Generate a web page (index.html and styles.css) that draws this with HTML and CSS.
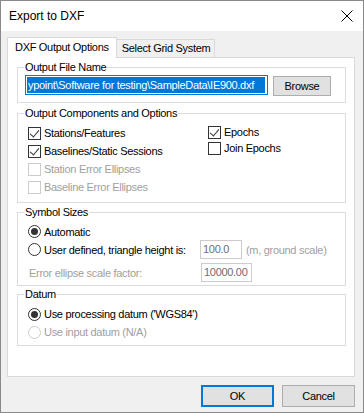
FILE: index.html
```html
<!DOCTYPE html>
<html lang="en">
<head>
  <meta charset="UTF-8">
  <title>Export to DXF</title>
  <link rel="stylesheet" href="styles.css">
</head>
<body>
  <div class="window">
    <div class="titlebar">
      <span class="title">Export to DXF</span>
      <svg class="close" width="12" height="12" viewBox="0 0 12 12">
        <path d="M0.5 0.5 L11.5 11.5 M11.5 0.5 L0.5 11.5" stroke="#000" stroke-width="1" fill="none"/>
      </svg>
    </div>

    <div class="content">
      <div class="tabs">
        <div class="tab active">DXF Output Options</div>
        <div class="tab">Select Grid System</div>
      </div>

      <div class="panel">
        <fieldset class="group group-file">
          <legend>Output File Name</legend>
          <div class="file-row">
            <div class="textbox focused"><span class="selected">ypoint\Software for testing\SampleData\IE900.dxf</span></div>
            <button class="btn btn-browse">Browse</button>
          </div>
        </fieldset>

        <fieldset class="group group-options">
          <legend>Output Components and Options</legend>
          <div class="columns">
            <div class="col col-left">
              <label class="check"><span class="box checked"></span>Stations/Features</label>
              <label class="check"><span class="box checked"></span>Baselines/Static Sessions</label>
              <label class="check disabled"><span class="box"></span>Station Error Ellipses</label>
              <label class="check disabled"><span class="box"></span>Baseline Error Ellipses</label>
            </div>
            <div class="col col-right">
              <label class="check"><span class="box checked"></span>Epochs</label>
              <label class="check"><span class="box"></span>Join Epochs</label>
            </div>
          </div>
        </fieldset>

        <fieldset class="group group-symbols">
          <legend>Symbol Sizes</legend>
          <label class="radio row-auto"><span class="dot on"></span>Automatic</label>
          <div class="row row-user">
            <label class="radio user-label"><span class="dot"></span>User defined, triangle height is:</label>
            <div class="textbox small">100.0</div>
            <span class="hint">(m, ground scale)</span>
          </div>
          <div class="row row-scale">
            <span class="field-label">Error ellipse scale factor:</span>
            <div class="textbox wide">10000.00</div>
          </div>
        </fieldset>

        <fieldset class="group group-datum">
          <legend>Datum</legend>
          <label class="radio"><span class="dot on"></span>Use processing datum ('WGS84')</label>
          <label class="radio disabled"><span class="dot"></span>Use input datum (N/A)</label>
        </fieldset>
      </div>

      <div class="buttons">
        <button class="btn btn-default">OK</button>
        <button class="btn">Cancel</button>
      </div>
    </div>
  </div>
</body>
</html>
```

FILE: styles.css
```css
body {
  margin: 0;
  font-family: "Liberation Sans", Arial, sans-serif;
  font-size: 11px;
  letter-spacing: -0.3px;
  color: #000;
}
.window {
  width: 364px;
  height: 413px;
  box-sizing: border-box;
  border: 1px solid #8a8a8a;
  background-color: #f0f0f0;
}
.titlebar {
  height: 30px;
  background-color: #fff;
  display: flex;
  align-items: center;
  justify-content: space-between;
  padding: 0 10px 0 8px;
  font-size: 12px;
  letter-spacing: 0;
}
.content {
  padding: 7px 8px 0 6px;
}

/* tabs */
.tabs {
  display: flex;
  align-items: flex-end;
  height: 19px;
  position: relative;
  z-index: 1;
}
.tab {
  height: 17px;
  line-height: 16px;
  padding: 0 4px 0 5px;
  border: 1px solid #d9d9d9;
  border-left: none;
  border-bottom: none;
  background-color: #f0f0f0;
  white-space: nowrap;
}
.tab.active {
  height: 20px;
  line-height: 18px;
  padding: 0 7px 0 7px;
  border-left: 1px solid #d9d9d9;
  background-color: #fff;
  margin-bottom: -1px;
}
.panel {
  height: 316px;
  border: 1px solid #d9d9d9;
  background-color: #fff;
  padding: 2px 8px 0 9px;
}

/* group boxes */
.group {
  margin: 0;
  min-width: 0;
  width: 329px;
  box-sizing: border-box;
  border: 1px solid #dcdcdc;
  padding: 0 7px 0 10px;
}
.group legend {
  margin-left: -4px;
  padding: 0 1px;
  line-height: 14px;
}
.group-file {
  padding-top: 1px;
  padding-bottom: 6px;
}
.group-options {
  margin-top: 3px;
  padding-top: 4px;
  padding-bottom: 6px;
}
.group-symbols {
  margin-top: 2px;
  padding-top: 4px;
  padding-bottom: 3px;
}
.group-datum {
  margin-top: 1px;
  padding-top: 4px;
  padding-bottom: 4px;
}

/* file row */
.file-row {
  display: flex;
  align-items: flex-start;
  margin-left: -3px;
}
.textbox {
  box-sizing: border-box;
  height: 19px;
  border: 1px solid #cccccc;
  background-color: #fff;
  color: #6d6d6d;
  line-height: 17px;
  padding: 0 2px;
  white-space: nowrap;
  overflow: hidden;
}
.textbox.focused {
  width: 243px;
  height: 20px;
  border-color: #0078d7;
  display: flex;
  justify-content: flex-end;
  padding: 1px 2px 1px 1px;
}
.selected {
  background-color: #0078d7;
  color: #fff;
  line-height: 16px;
  white-space: nowrap;
  padding-left: 1px;
  flex: 1 0 auto;
}
.btn {
  font-family: inherit;
  font-size: 11px;
  letter-spacing: -0.3px;
  color: #000;
  background-color: #e1e1e1;
  border: 1px solid #adadad;
  padding: 0;
  box-sizing: border-box;
}
.btn-browse {
  width: 58px;
  height: 20px;
  margin: 1px 0 0 5px;
}

/* checkboxes */
.columns {
  display: flex;
}
.col-left {
  width: 180px;
}
.check, .radio {
  display: flex;
  align-items: center;
  height: 18px;
  white-space: nowrap;
}
.col-right .check {
  height: 16px;
}
.box {
  width: 13px;
  height: 13px;
  box-sizing: border-box;
  border: 1px solid #333;
  margin-right: 3px;
  flex: none;
  position: relative;
}
.box.checked::after {
  content: "";
  position: absolute;
  left: 3px;
  top: 0;
  width: 4px;
  height: 8px;
  border-right: 1px solid #333;
  border-bottom: 1px solid #333;
  transform: rotate(40deg);
}
.disabled {
  color: #a0a0a0;
}
.disabled .box, .disabled .dot {
  border-color: #cccccc;
}

/* radios */
.dot {
  width: 13px;
  height: 13px;
  box-sizing: border-box;
  border: 1px solid #333;
  border-radius: 50%;
  margin-right: 3px;
  flex: none;
  display: flex;
  align-items: center;
  justify-content: center;
}
.dot.on::after {
  content: "";
  width: 7px;
  height: 7px;
  border-radius: 50%;
  background-color: #333;
}
.row-auto {
  height: 17px;
}
.row {
  display: flex;
  align-items: center;
  height: 19px;
}
.user-label {
  width: 172px;
}
.textbox.small {
  width: 42px;
}
.textbox.wide {
  width: 51px;
}
.hint {
  color: #a0a0a0;
  margin-left: 4px;
}
.row-scale {
  margin-top: 4px;
}
.field-label {
  width: 172px;
  color: #a0a0a0;
  padding-left: 1px;
}

/* dialog buttons */
.buttons {
  display: flex;
  justify-content: flex-end;
  gap: 8px;
  margin-top: 8px;
}
.buttons .btn {
  width: 73px;
  height: 22px;
}
.btn-default {
  border: 2px solid #0078d7;
}
```
